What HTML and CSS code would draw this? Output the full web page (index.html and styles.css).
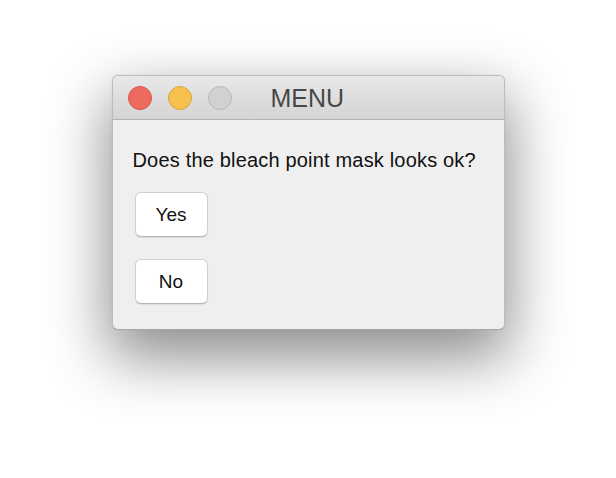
FILE: index.html
```html
<!DOCTYPE html>
<html>
<head>
<meta charset="utf-8">
<link rel="stylesheet" href="styles.css">
</head>
<body>
<div class="stage">
  <div class="window">
    <div class="titlebar">
      <div class="lights">
        <span class="light red"></span>
        <span class="light yellow"></span>
        <span class="light gray"></span>
      </div>
      <div class="title">MENU</div>
    </div>
    <div class="content">
      <p class="question">Does the bleach point mask looks ok?</p>
      <div class="buttons">
        <button class="btn">Yes</button>
        <button class="btn">No</button>
      </div>
    </div>
  </div>
</div>
</body>
</html>
```
FILE: styles.css
```css
html, body {
  margin: 0;
  padding: 0;
  background: #ffffff;
}
.stage {
  width: 616px;
  height: 478px;
  display: flex;
  justify-content: center;
  align-items: flex-start;
  padding-top: 75px;
  box-sizing: border-box;
  font-family: "Liberation Sans", Arial, sans-serif;
}
.window {
  width: 393px;
  height: 255px;
  box-sizing: border-box;
  border: 1px solid #bdbdbd;
  border-bottom-color: #a8a8a8;
  border-radius: 6px;
  background: #efefef;
  box-shadow: 0 24px 60px 4px rgba(0, 0, 0, 0.45), 0 0 1px rgba(0,0,0,0.2);
  overflow: hidden;
  display: flex;
  flex-direction: column;
}
.titlebar {
  height: 43px;
  flex: none;
  background: linear-gradient(#e9e8e9, #d4d4d4);
  border-bottom: 1px solid #b3b3b3;
  display: flex;
  align-items: center;
  padding-left: 15px;
}
.lights {
  display: flex;
  gap: 16px;
}
.light {
  width: 22px;
  height: 22px;
  border-radius: 50%;
  border: 1px solid transparent;
  display: block;
}
.red { background: #ee6a5e; border-color: #d5544a; }
.yellow { background: #f6c04f; border-color: #d9a53c; }
.gray { background: #d1d1d1; border-color: #b6b6b6; }
.title {
  margin-left: 39px;
  font-size: 25px;
  color: #474747;
  margin-top: 2px;
}
.content {
  padding: 28px 19px 0 20px;
}
.question {
  margin: 0;
  font-size: 20px;
  line-height: 24px;
  letter-spacing: 0.18px;
  color: #111;
}
.buttons {
  display: flex;
  flex-direction: column;
  align-items: flex-start;
  gap: 22px;
  margin-top: 20px;
  padding-left: 2px;
}
.btn {
  width: 73px;
  height: 45px;
  box-sizing: border-box;
  background: #ffffff;
  border: 1px solid #cfcfcf;
  border-bottom-color: #b4b4b4;
  border-radius: 6px;
  box-shadow: 0 1px 1px rgba(0,0,0,0.08);
  font-family: "Liberation Sans", Arial, sans-serif;
  font-size: 19px;
  color: #111;
  padding: 0;
  display: flex;
  align-items: center;
  justify-content: center;
}
```
